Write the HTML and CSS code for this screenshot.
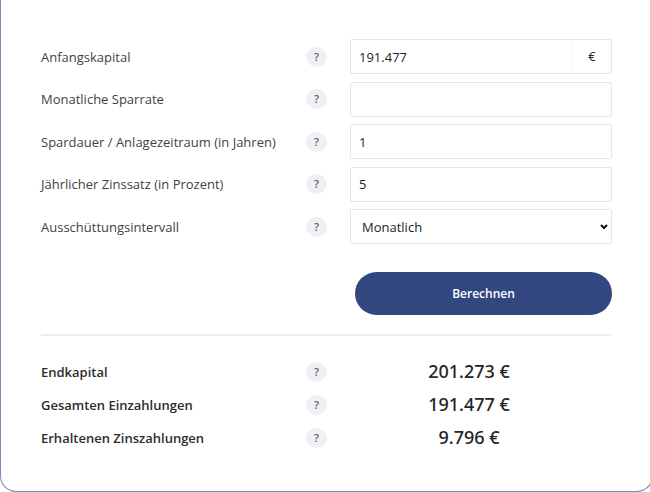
FILE: index.html
```html
<!DOCTYPE html>
<html lang="de">
<head>
<meta charset="utf-8">
<title>Zinsrechner</title>
<link rel="stylesheet" href="styles.css">
</head>
<body>
<main class="card">
  <form class="calculator">
    <div class="fields">
      <div class="row">
        <label class="label" for="capital">Anfangskapital</label>
        <button class="help" type="button">?</button>
        <div class="control money"><input class="money-input" id="capital" type="text" value="191.477"><span class="unit">€</span></div>
      </div>
      <div class="row">
        <label class="label" for="rate">Monatliche Sparrate</label>
        <button class="help" type="button">?</button>
        <input class="control" id="rate" type="text">
      </div>
      <div class="row">
        <label class="label" for="years">Spardauer / Anlagezeitraum (in Jahren)</label>
        <button class="help" type="button">?</button>
        <input class="control" id="years" type="text" value="1">
      </div>
      <div class="row">
        <label class="label" for="interest">Jährlicher Zinssatz (in Prozent)</label>
        <button class="help" type="button">?</button>
        <input class="control" id="interest" type="text" value="5">
      </div>
      <div class="row">
        <label class="label" for="interval">Ausschüttungsintervall</label>
        <button class="help" type="button">?</button>
        <div class="control choice">
          <select class="select" id="interval"><option>Monatlich</option></select>
          <svg class="arrow" viewBox="0 0 8 6" aria-hidden="true"><path d="M1 1l3 3 3-3"/></svg>
        </div>
      </div>
    </div>
    <div class="actions"><button class="submit" type="submit">Berechnen</button></div>
  </form>
  <section class="results">
    <div class="row">
      <span class="label total">Endkapital</span>
      <button class="help" type="button">?</button>
      <output class="value">201.273 €</output>
    </div>
    <div class="row">
      <span class="label total">Gesamten Einzahlungen</span>
      <button class="help" type="button">?</button>
      <output class="value">191.477 €</output>
    </div>
    <div class="row">
      <span class="label total">Erhaltenen Zinszahlungen</span>
      <button class="help" type="button">?</button>
      <output class="value">9.796 €</output>
    </div>
  </section>
</main>
</body>
</html>
```
FILE: styles.css
```css
* {
  box-sizing: border-box;
}

body {
  margin: 0;
  overflow-x: hidden;
  background: #fff;
  color: #242424;
  font-family: "Open Sans", "Noto Sans", sans-serif;
  font-size: 13px;
}

button,
input,
select {
  font: inherit;
  color: inherit;
}

.card {
  margin-right: -3px;
  padding: 39px 40px 41px;
  border: 1px solid #7b89b3;
  border-top: 0;
  border-radius: 0 0 16px 16px;
}

.fields {
  display: grid;
  align-content: space-between;
  min-height: 205px;
}

.row {
  display: grid;
  grid-template-columns: 265px 21px minmax(0, 1fr);
  align-items: center;
}

.label {
  color: #424242;
}

.total {
  color: #2d2d2d;
  font-weight: 600;
}

.help {
  width: 21px;
  height: 20px;
  padding: 0;
  border: 0;
  border-radius: 50%;
  background: #eff0f5;
  color: #5c6068;
  font-size: 11px;
  font-weight: 600;
  line-height: 20px;
}

.control {
  height: 35px;
  min-width: 0;
  margin-left: 23px;
  padding: 0 8px;
  border: 1px solid #e0e7eb;
  border-radius: 2px;
  background: #fff;
}

.money {
  display: flex;
  align-items: center;
  padding-right: 0;
}

.money-input {
  flex: 1;
  min-width: 0;
  padding: 0;
  border: 0;
  background: none;
}

.unit {
  width: 39px;
  border-left: 1px solid #f2f4f6;
  line-height: 25px;
  text-align: center;
}

.choice {
  position: relative;
  padding: 0;
}

.select {
  display: block;
  width: 100%;
  height: 33px;
  padding: 0 20px 0 11px;
  border: 0;
  background: none;
  appearance: none;
}

.arrow {
  position: absolute;
  top: 14px;
  right: 3px;
  width: 8px;
  height: 6px;
  fill: none;
  stroke: #111;
  stroke-width: 2;
  pointer-events: none;
}

.actions {
  margin-top: 28px;
  padding-left: 314px;
}

.submit {
  display: block;
  width: 100%;
  height: 43px;
  border: 0;
  border-radius: 22px;
  background: #32477f;
  color: #fff;
  font-size: 12px;
  font-weight: 600;
}

.results {
  display: grid;
  gap: 8px;
  margin-top: 19px;
  padding-top: 23px;
  border-top: 2px solid #ebeef2;
}

.value {
  padding-right: 24px;
  padding-left: 23px;
  font-family: "Noto Sans", "Open Sans", sans-serif;
  font-size: 18px;
  font-weight: 500;
  line-height: 25px;
  text-align: center;
}
```
